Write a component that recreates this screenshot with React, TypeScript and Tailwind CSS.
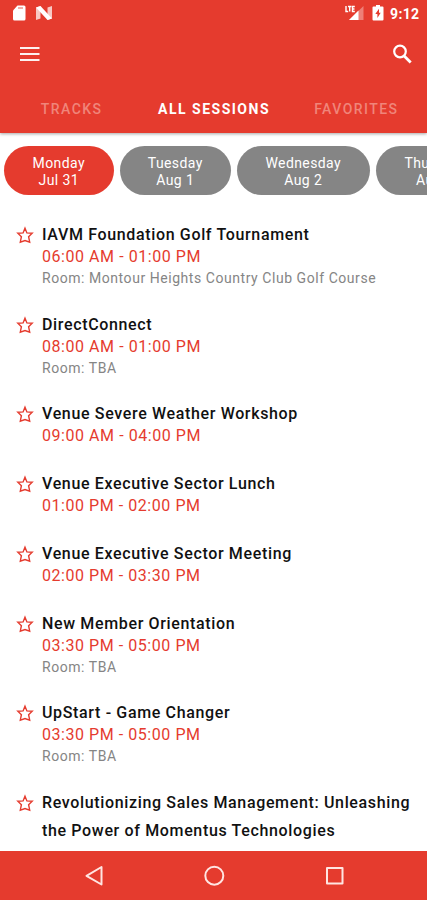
import React from "react";

type Session = { title: string; time?: string; room?: string };

const sessions: Session[] = [
  { title: "IAVM Foundation Golf Tournament", time: "06:00 AM - 01:00 PM", room: "Room: Montour Heights Country Club Golf Course" },
  { title: "DirectConnect", time: "08:00 AM - 01:00 PM", room: "Room: TBA" },
  { title: "Venue Severe Weather Workshop", time: "09:00 AM - 04:00 PM" },
  { title: "Venue Executive Sector Lunch", time: "01:00 PM - 02:00 PM" },
  { title: "Venue Executive Sector Meeting", time: "02:00 PM - 03:30 PM" },
  { title: "New Member Orientation", time: "03:30 PM - 05:00 PM", room: "Room: TBA" },
  { title: "UpStart - Game Changer", time: "03:30 PM - 05:00 PM", room: "Room: TBA" },
  { title: "Revolutionizing Sales Management: Unleashing the Power of Momentus Technologies" },
];

const days = [
  { day: "Monday", date: "Jul 31", style: "w-[109.5px] bg-[#e53b2e]" },
  { day: "Tuesday", date: "Aug 1", style: "w-[111.5px] bg-[#858585]" },
  { day: "Wednesday", date: "Aug 2", style: "w-[132.5px] bg-[#858585]" },
  { day: "Thursday", date: "Aug 3", style: "w-[119px] bg-[#858585]" },
];

function StatusBar() {
  return (
    <div className="flex h-[28px] items-center pl-[12px] pr-[7px] text-white">
      <svg className="mb-[2px]" width="14" height="16" viewBox="0 0 14 16" fill="currentColor">
        <path d="M5.500.5H12q1.500 0 1.500 1.500V14q0 1.500-1.500 1.500H2.500Q1 15.500 1 14V5.500z" />
        <path d="M6 3h5" stroke="#e53b2e" strokeOpacity=".55" strokeWidth="1.500" />
      </svg>
      <svg className="mb-[2px] ml-[10px]" width="16" height="14" viewBox="0 0 16 14">
        <path d="M0 1.500 4.500 0v12.500L0 14zM11.500 1.500 16 0v12.500L11.500 14z" fill="#fff" fillOpacity=".72" />
        <path d="M0 1.500 4.500 0 16 12.500 11.500 14z" fill="#fff" />
      </svg>
      <svg className="mb-[2px] ml-auto" width="19" height="16" viewBox="0 0 19 16">
        <path d="M18.500 1v14H4z" fill="#fff" fillOpacity=".35" />
        <path d="M13.500 5.500V15H4z" fill="#fff" />
        <path d="M1 1v5.500h2.200M3 1.500h3.400M4.700 1.500v5M9.800 1.500H7.500v5h2.300M7.500 4h2" fill="none" stroke="#fff" strokeWidth="1.400" />
      </svg>
      <svg className="mb-[2px] ml-[8px]" width="12" height="16" viewBox="0 0 12 16" fill="currentColor">
        <path fillRule="evenodd" d="M4 0h4v1.500h2.500q1 0 1 1v12q0 1-1 1h-9q-1 0-1-1v-12q0-1 1-1H4zM7 3.800 3.300 9h2.100v4L8.700 7.800H7z" />
      </svg>
      <span className="ml-[6px] w-[30px] whitespace-nowrap text-[14px] font-bold leading-4 tracking-[0.35px]">9:12</span>
    </div>
  );
}

function Header() {
  return (
    <header className="relative z-10 h-[133px] shrink-0 bg-[#e53b2e] shadow-[0_1px_3px_rgba(0,0,0,0.35)]">
      <StatusBar />
      <div className="flex h-[52px] items-center justify-between pl-[20px] pr-[15px] text-white">
        <svg width="20" height="16" viewBox="0 0 20 16" fill="none" stroke="#fff" strokeOpacity=".93" strokeWidth="2.200">
          <path d="M0 2h19.500M0 8h19.500M0 14h19.500" />
        </svg>
        <svg width="20" height="20" viewBox="0 0 20 20" fill="none" stroke="#fff" strokeWidth="2.200">
          <circle cx="8" cy="7.500" r="5.800" />
          <path d="m12.200 12 6.500 6.500" strokeWidth="2.800" />
        </svg>
      </div>
      <nav className="grid h-[53px] grid-cols-3 text-center text-[14px] font-medium leading-[58px] tracking-[1.45px]">
        <div className="pl-[1px] text-[#f0857a]">TRACKS</div>
        <div className="border-b-[3px] border-white pl-[1px] font-bold tracking-[1.5px] text-white">ALL SESSIONS</div>
        <div className="pl-[1px] text-[#f0857a]">FAVORITES</div>
      </nav>
    </header>
  );
}

function Star() {
  return (
    <svg className="mt-[5px] shrink-0" width="18" height="18" viewBox="0 0 18 18" fill="none" stroke="#e53b2e" strokeWidth="1.400" strokeLinejoin="miter">
      <path d="M9 2.200 10.900 6.900 16.200 7.200 12.600 10.700 13.700 16.200 9 14.600 4.300 16.200 5.400 10.700 1.800 7.200 7.100 6.900z" />
    </svg>
  );
}

function SessionRow({ title, time, room }: Session) {
  return (
    <li className="flex gap-[8px] pb-[26px]">
      <Star />
      <div className="min-w-0 flex-1">
        <h2 className="text-[16px] font-medium leading-[28px] tracking-[0.65px] text-[#111]">{title}</h2>
        {time && <p className="h-[16px] text-[16px] leading-[16.5px] tracking-[0.55px] text-[#e53b2e]">{time}</p>}
        {room && <p className="h-[19.35px] whitespace-nowrap text-[14px] leading-[26px] tracking-[0.55px] text-[#858585]">{room}</p>}
      </div>
    </li>
  );
}

export default function App() {
  return (
    <div className="flex h-[900px] w-[427px] flex-col overflow-hidden bg-white font-['Roboto',sans-serif]">
      <Header />
      <div className="flex shrink-0 gap-[6px] overflow-hidden pl-[4px] pt-[13px]">
        {days.map(({ day, date, style }) => (
          <div key={day} className={`flex h-[49px] shrink-0 flex-col items-center justify-center rounded-full pt-[2px] text-[14px] leading-[17px] tracking-[0.4px] text-white ${style}`}>
            <span>{day}</span>
            <span>{date}</span>
          </div>
        ))}
      </div>
      <ul className="min-h-0 flex-1 overflow-hidden pl-[16px] pr-[10px] pt-[26.2px]">
        {sessions.map((session) => (
          <SessionRow key={session.title} {...session} />
        ))}
      </ul>
      <footer className="h-[49px] shrink-0 bg-[#e53b2e]">
        <svg width="427" height="49" viewBox="0 0 427 49" fill="none" stroke="#ffe5e2" strokeWidth="2" strokeLinejoin="round">
          <path d="M101.500 16v17.500L86.500 24.800z" />
          <circle cx="214.300" cy="24.700" r="9" />
          <path d="M327 17h15.500v15.500H327z" />
        </svg>
      </footer>
    </div>
  );
}
